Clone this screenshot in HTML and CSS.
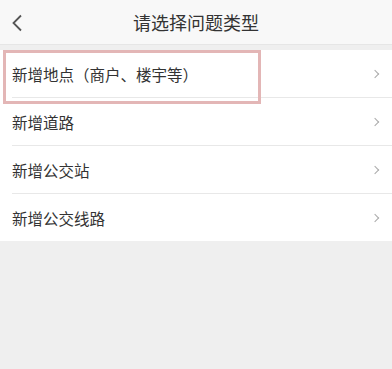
FILE: index.html
```html
<!DOCTYPE html>
<html lang="zh-CN">
<head>
  <meta charset="UTF-8" />
  <meta name="viewport" content="width=device-width, initial-scale=1.0" />
  <title>请选择问题类型</title>
  <link rel="stylesheet" href="styles.css">
</head>
<body>
  <header class="topbar">
    <span class="back">
      <svg width="12" height="18" viewBox="0 0 12 18"><path d="M10 1.5 L2.5 9 L10 16.5" fill="none" stroke="#555" stroke-width="1.8"/></svg>
    </span>
    <h1>请选择问题类型</h1>
  </header>

  <ul class="list">
    <li class="item marked">新增地点（商户、楼宇等）<span class="arrow"></span></li>
    <li class="item">新增道路<span class="arrow"></span></li>
    <li class="item">新增公交站<span class="arrow"></span></li>
    <li class="item">新增公交线路<span class="arrow"></span></li>
  </ul>
</body>
</html>
```

FILE: styles.css
```css
body {
  margin: 0;
  background: #efefef;
  font-family: "Noto Sans CJK SC", "Noto Sans", sans-serif;
  color: #333;
  height: 369px;
}
.topbar {
  position: relative;
  height: 44px;
  background: #f8f8f8;
  border-bottom: 1px solid #e6e6e6;
  display: flex;
  align-items: center;
  justify-content: center;
}
.topbar h1 { margin: 0; font-size: 18px; font-weight: normal; color: #333; }
.back { position: absolute; left: 11px; top: 13px; }

.list {
  list-style: none;
  margin: 5px 0 0;
  padding: 0;
  background: #fff;
}
.item {
  position: relative;
  height: 47px;
  display: flex;
  align-items: center;
  margin-left: 12px;
  padding-right: 12px;
  font-size: 15.5px;
  border-bottom: 1px solid #e8e8e8;
}
.item:last-child { border-bottom: none; }
.arrow {
  margin-left: auto;
  width: 5px;
  height: 5px;
  border-top: 1px solid #aaa;
  border-right: 1px solid #aaa;
  transform: rotate(45deg);
  margin-right: 2px;
}
/* rectangle drawn over the first row */
.marked::before {
  content: "";
  position: absolute;
  left: -9px;
  top: 0;
  width: 252px;
  height: 48px;
  border: 3px solid #e3b6b6;
}
```
